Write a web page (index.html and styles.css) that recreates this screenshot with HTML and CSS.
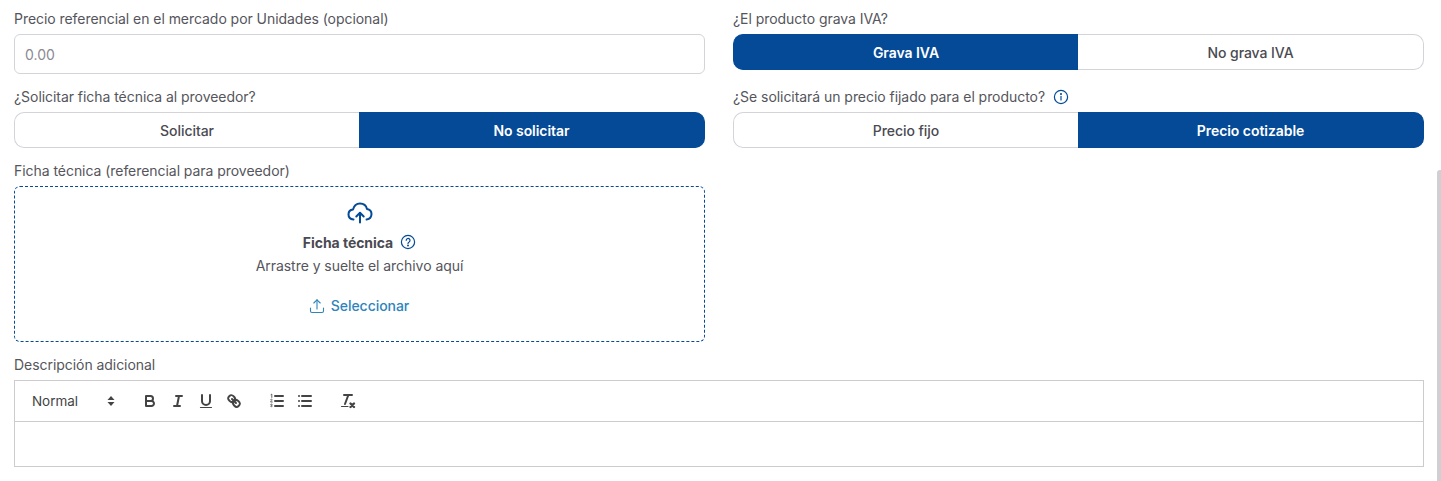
FILE: index.html
```html
<!doctype html>
<html>
<head>
<meta charset="utf-8">
<title>Producto</title>
    <link rel="stylesheet" href="styles.css">
</head>

<body>
    <form class="form-grid">
        <div class="field">
            <label class="lbl">Precio referencial en el mercado por Unidades (opcional)</label>
            <input class="txt" type="text" placeholder="0.00">
        </div>
        <div class="field">
            <label class="lbl">¿El producto grava IVA?</label>
            <div class="toggle">
                <button type="button" class="opt active">Grava IVA</button>
                <button type="button" class="opt">No grava IVA</button>
            </div>
        </div>

        <div class="field">
            <label class="lbl">¿Solicitar ficha técnica al proveedor?</label>
            <div class="toggle">
                <button type="button" class="opt">Solicitar</button>
                <button type="button" class="opt active">No solicitar</button>
            </div>
        </div>
        <div class="field">
            <label class="lbl">¿Se solicitará un precio fijado para el producto?
                <svg class="ico-info" viewBox="0 0 16 16" fill="none" stroke="currentColor" stroke-width="1.2" stroke-linecap="round">
                    <circle cx="8" cy="8" r="6.6"/>
                    <path d="M8 7.4v3.6"/>
                    <circle cx="8" cy="5" r=".45" fill="currentColor"/>
                </svg>
            </label>
            <div class="toggle">
                <button type="button" class="opt">Precio fijo</button>
                <button type="button" class="opt active">Precio cotizable</button>
            </div>
        </div>

        <div class="field">
            <label class="lbl">Ficha técnica (referencial para proveedor)</label>
            <div class="drop">
                <svg class="ico-cloud" viewBox="0 0 26 22" fill="none" stroke="currentColor" stroke-width="2" stroke-linecap="round" stroke-linejoin="round">
                    <path d="M6.5 17.5c-3-.3-5-2.400-5-5 0-2.700 2-4.700 4.500-5C7 3.800 9.800 1.500 13 1.500c3.400 0 6.200 2.200 7 5.400 2.700.4 4.500 2.600 4.500 5.200 0 2.700-2 5-4.900 5.400"/>
                    <path d="M13 20.500v-9.500"/>
                    <path d="M9.300 14.500L13 10.800l3.700 3.700"/>
                </svg>
                <div class="drop-title">Ficha técnica
                    <svg class="ico-help" viewBox="0 0 16 16" fill="none" stroke="currentColor" stroke-width="1.2" stroke-linecap="round">
                        <circle cx="8" cy="8" r="6.6"/>
                        <path d="M6.2 6.3a1.9 1.9 0 1 1 2.9 1.6c-.7.4-1.1.8-1.1 1.6"/>
                        <circle cx="8" cy="11.6" r=".4" fill="currentColor"/>
                    </svg>
                </div>
                <div class="drop-text">Arrastre y suelte el archivo aquí</div>
                <a class="drop-btn" href="#">
                    <svg viewBox="0 0 16 16" fill="none" stroke="currentColor" stroke-width="1.1" stroke-linecap="round" stroke-linejoin="round">
                        <path d="M1.5 10v3a1.5 1.5 0 0 0 1.5 1.5h10a1.5 1.5 0 0 0 1.5-1.5v-3"/>
                        <path d="M8 11V1.8"/>
                        <path d="M4.8 5L8 1.8 11.2 5"/>
                    </svg>
                    Seleccionar
                </a>
            </div>
        </div>
        <div></div>

        <div class="field wide">
            <label class="lbl">Descripción adicional</label>
            <div class="editor">
                <div class="toolbar">
                    <span class="picker">Normal
                        <svg viewBox="0 0 18 18" fill="#444"><path d="M5.500 8L9 4l3.500 4z"/><path d="M5.500 10L9 14l3.500-4z"/></svg>
                    </span>
                    <span class="tools">
                        <svg viewBox="0 0 18 18"><path d="M5,4H9.5A2.5,2.5,0,0,1,12,6.5v0A2.5,2.5,0,0,1,9.5,9H5A0,0,0,0,1,5,9V4A0,0,0,0,1,5,4Z"/><path d="M5,9h5.5A2.5,2.5,0,0,1,13,11.5v0A2.5,2.5,0,0,1,10.5,14H5a0,0,0,0,1,0,0V9A0,0,0,0,1,5,9Z"/></svg>
                        <svg viewBox="0 0 18 18"><path d="M7 4h6M5 14h6M8 14l2-10"/></svg>
                        <svg viewBox="0 0 18 18"><path d="M5,3V9a4.012,4.012,0,0,0,4,4H9a4.012,4.012,0,0,0,4-4V3"/><path d="M3.5 15.5h11" stroke-width="1.2"/></svg>
                        <svg viewBox="0 0 18 18"><path d="M7 7l4 4"/><path d="M8.9,4.577a3.476,3.476,0,0,1,.36,4.679A3.476,3.476,0,0,1,4.577,8.9C3.185,7.5,2.035,6.4,4.217,4.217S7.5,3.185,8.9,4.577Z"/><path d="M13.423,9.1a3.476,3.476,0,0,0-4.679-.36,3.476,3.476,0,0,0,.36,4.679c1.392,1.392,2.5,2.542,4.679.36S14.815,10.5,13.423,9.1Z"/></svg>
                    </span>
                    <span class="tools">
                        <svg viewBox="0 0 18 18"><path d="M7 4h8M7 9h8M7 14h8"/><path class="thin" d="M3 2.6l.8-.5v3.4M2.6 7.6c.6-.7 1.7-.4 1.6.3 0 .6-1.5 1.2-1.6 2.1h1.7M2.7 12.3c.5-.4 1.5-.3 1.5.4 0 .4-.4.6-.8.6.5 0 .9.3.9.7 0 .8-1.2.9-1.7.4"/></svg>
                        <svg viewBox="0 0 18 18"><path d="M6 4h9M6 9h9M6 14h9M3 4h.01M3 9h.01M3 14h.01"/></svg>
                    </span>
                    <span class="tools">
                        <svg viewBox="0 0 18 18"><path d="M5 3h8M6 12l3.35-9"/><path class="heavy" d="M11.5 11.5l3.5 3.5M15 11.5l-3.5 3.5"/><path d="M2.5 14.5h6.5" stroke-width="1.2"/></svg>
                    </span>
                </div>
                <div class="editor-body"></div>
            </div>
        </div>
    </form>

    <!-- barra de scroll -->
    <div class="scrollbar"></div>
</body>
</html>
```

FILE: styles.css
```css
* {
    box-sizing: border-box;
}

body {
    margin: 0;
    padding: 9px 17px 0 14px;
    background: #fff;
    color: #4a4a52;
    font-family: Inter, "Liberation Sans", sans-serif;
    font-size: 14px;
    letter-spacing: -0.05px;
    overflow: hidden;
}

.form-grid {
    display: grid;
    grid-template-columns: 1fr 1fr;
    column-gap: 28px;
    row-gap: 13px;
    align-items: start;
}

.wide {
    grid-column: 1 / 3;
}

.lbl {
    display: flex;
    align-items: center;
    gap: 8px;
    height: 20px;
    margin-bottom: 5px;
    font-size: 14px;
    line-height: 20px;
    color: #55555c;
}

.ico-info {
    width: 16px;
    height: 16px;
    color: #044a97;
}

/* input de precio */
.txt {
    display: block;
    width: 100%;
    height: 40px;
    padding: 0 10px;
    border: 1px solid #d4d4d8;
    border-radius: 6px;
    font-family: inherit;
    font-size: 14px;
    color: #333;
}

.txt::placeholder {
    color: #8a8a92;
    opacity: 1;
}

/* botones de dos opciones */
.toggle {
    display: flex;
    height: 36px;
}

.opt {
    margin: 0;
    padding: 0;
    border: 1px solid #d4d4d8;
    background: #fff;
    color: #4a4a52;
    font-family: inherit;
    font-size: 14px;
    font-weight: 500;
    letter-spacing: inherit;
}

.opt:first-child {
    flex: 0 0 345px;
    border-right: 0;
    border-radius: 10px 0 0 10px;
}

.opt:last-child {
    flex: 1 1 0;
    border-left: 0;
    border-radius: 0 10px 10px 0;
}

.opt.active {
    border-color: #044a97;
    background: #044a97;
    color: #fff;
    font-weight: 600;
}

/* zona de carga */
.drop {
    display: flex;
    flex-direction: column;
    align-items: center;
    height: 156px;
    padding-top: 15px;
    border: 1px dashed #044a97;
    border-radius: 6px;
}

.ico-cloud {
    width: 26px;
    height: 22px;
    color: #044a97;
}

.drop-title {
    display: flex;
    align-items: center;
    gap: 7px;
    margin-top: 8px;
    height: 20px;
    font-weight: 700;
    font-size: 14px;
    color: #4a4a52;
}

.ico-help {
    width: 16px;
    height: 16px;
    color: #044a97;
}

.drop-text {
    margin-top: 4px;
    line-height: 20px;
    color: #55555c;
}

.drop-btn {
    display: flex;
    align-items: center;
    gap: 6px;
    margin-top: 20px;
    padding-right: 1px;
    line-height: 20px;
    font-weight: 500;
    color: #2f84bb;
    text-decoration: none;
}

.drop-btn svg {
    width: 16px;
    height: 16px;
}

/* editor */
.editor {
    border: 1px solid #ccc;
}

.toolbar {
    display: flex;
    align-items: center;
    height: 41px;
    padding-left: 17px;
    border-bottom: 1px solid #ccc;
}

.picker {
    display: flex;
    align-items: center;
    justify-content: space-between;
    width: 86px;
    margin-right: 23px;
    font-size: 13.5px;
    color: #444;
}

.picker svg {
    width: 18px;
    height: 18px;
    margin-right: -2px;
}

.tools {
    display: flex;
    gap: 10px;
    margin-right: 25px;
}

.tools svg {
    width: 18px;
    height: 18px;
    fill: none;
    stroke: #444;
    stroke-width: 2;
    stroke-linecap: round;
    stroke-linejoin: round;
}

.tools .thin {
    stroke-width: .8;
}

.tools .heavy {
    stroke-width: 2.4;
}

.editor-body {
    height: 44px;
}

.scrollbar {
    position: absolute;
    top: 170px;
    right: 0;
    bottom: 0;
    width: 4px;
    background: #cfcfd4;
    border-radius: 3px 0 0 0;
}
```
